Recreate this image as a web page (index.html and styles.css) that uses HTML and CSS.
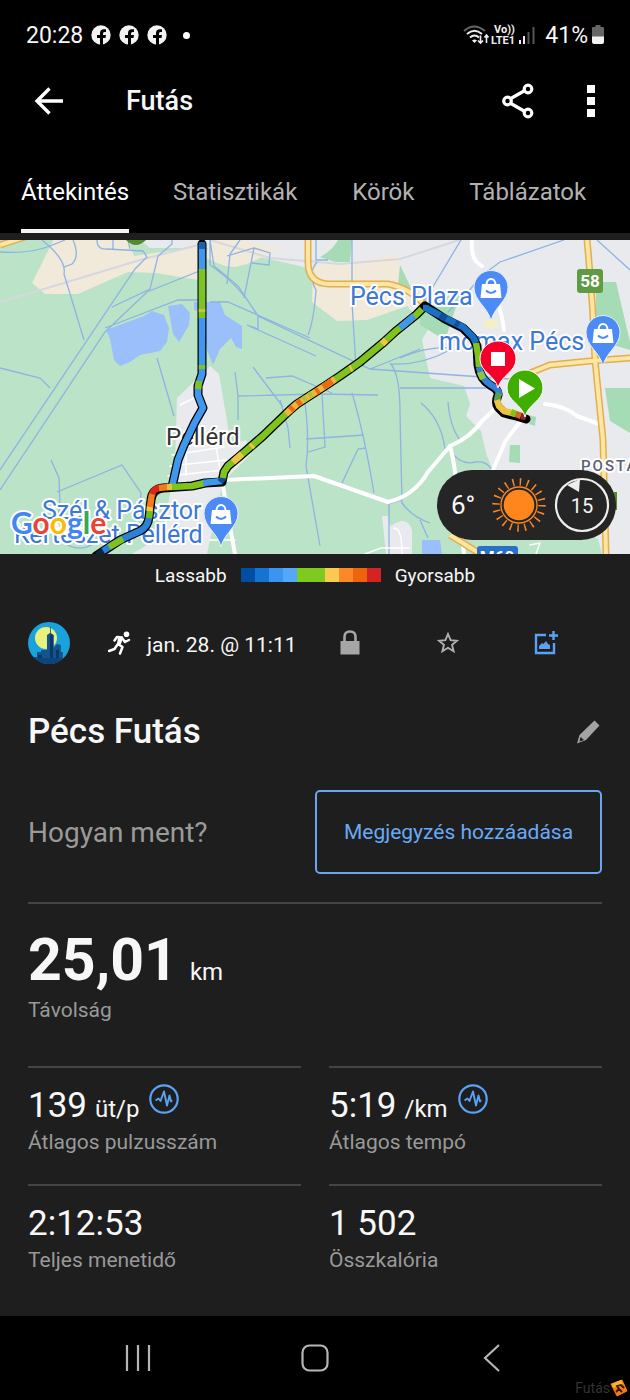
FILE: index.html
```html
<!DOCTYPE html>
<html lang="hu">
<head>
<meta charset="utf-8">
<meta name="viewport" content="width=device-width, initial-scale=1">
<title>Futás</title>
<link rel="stylesheet" href="styles.css">
</head>
<body>
<svg class="defs" aria-hidden="true">
  <symbol id="fb" viewBox="0 0 20 20"><circle cx="10" cy="10" r="9.7" fill="#f2f2f2"/><path d="M9 20v-7H6v-3h3V8.200q0-4 4-4h2v2.800h-1.500q-1.500 0-1.500 1.500V10h3l-.5 3H12v7z" fill="#000"/></symbol>
  <symbol id="pulse" viewBox="0 0 30 30"><circle cx="15" cy="15" r="13.700" fill="none" stroke="#5aa2f5" stroke-width="2.200"/><path d="M6.500 16.500l3-2 2 2.500 3.500-9.500 3 14 2.500-10 1.500 6 1-1.500" fill="none" stroke="#5aa2f5" stroke-width="1.900" stroke-linejoin="round"/></symbol>
  <symbol id="shop" viewBox="0 0 36 52"><path d="M18 51C15 37 1 31 1 17.500a17 17 0 0 1 34 0C35 31 21 37 18 51z" fill="#4c8bf5" stroke="#e6eefc" stroke-width="1"/><path d="M9 14h18l1.500 14h-21z" fill="#fff"/><path d="M13.500 15c0-8 9-8 9 0" fill="none" stroke="#fff" stroke-width="2"/><path d="M13 20.500q5 5 10 0" fill="none" stroke="#4c8bf5" stroke-width="2"/></symbol>
</svg>

<header class="top">
  <div class="status">
    <span class="clock">20:28</span>
    <svg class="fb"><use href="#fb"/></svg>
    <svg class="fb"><use href="#fb"/></svg>
    <svg class="fb"><use href="#fb"/></svg>
    <span class="dot"></span>
    <span class="status-right">
      <svg width="74" height="22" viewBox="0 0 74 22" fill="none" aria-hidden="true">
        <path d="M1 7Q11-2 22 7" stroke="#666" stroke-width="2"/>
        <path d="M4 10Q11.500 3.500 19 10M7 13.500q4.500-4 9 0" stroke="#eee" stroke-width="2"/>
        <path d="M9 16.500q2.500-2 5 0l-2.500 2.500z" fill="#eee"/>
        <path d="M17.500 11.500v7M15 16.500l2.500 2.500 2.500-2.500M23.500 19v-7.500M21.500 13.500l2-2.500 2 2.500" stroke="#eee" stroke-width="1.600"/>
        <text class="volte" x="31" y="9">Vo))</text>
        <text class="volte" x="28" y="20">LTE1</text>
        <path d="M57 16v4M61 12v8" stroke="#eee" stroke-width="2"/><path d="M65.500 8v12M70.500 3v17" stroke="#555" stroke-width="2"/>
      </svg>
      <span>41%</span>
      <svg width="12" height="20" viewBox="0 0 12 20" aria-hidden="true"><path d="M3.500 0h5v2H11q1 0 1 1v9H0V3q0-1 1-1h2.500z" fill="#666"/><path d="M0 11.500h12V17q0 2-2 2H2q-2 0-2-2z" fill="#f2f2f2"/></svg>
    </span>
  </div>
  <div class="appbar">
    <button class="icon" aria-label="Vissza"><svg width="30" height="30" viewBox="0 0 30 30"><path d="M15.500 2.500L3 15l12.500 12.500M3 15h26" fill="none" stroke="#fff" stroke-width="3.400"/></svg></button>
    <h1>Futás</h1>
    <button class="icon share" aria-label="Megosztás"><svg width="34" height="36" viewBox="0 0 34 36" fill="none" stroke="#fff" stroke-width="3.200"><path d="M9 16l14-8M9 20l14 8"/><circle cx="6.500" cy="18" r="3.800"/><circle cx="27" cy="6" r="3.800"/><circle cx="27" cy="30" r="3.800"/></svg></button>
    <button class="icon" aria-label="Továbbiak"><svg width="8" height="34" viewBox="0 0 8 34" fill="#fff"><path d="M0 1h8v8H0zM0 13h8v8H0zM0 25h8v8H0z"/></svg></button>
  </div>
  <nav class="tabs">
    <a href="#attekintes" class="active"><span>Áttekintés</span></a>
    <a href="#statisztikak"><span>Statisztikák</span></a>
    <a href="#korok"><span>Körök</span></a>
    <a href="#tablazatok"><span>Táblázatok</span></a>
  </nav>
</header>

<main>
  <section class="map" aria-label="Térkép">
    <svg class="map-canvas" viewBox="0 240 630 314">
      <rect y="240" width="630" height="314" fill="#bbe3c7"/>
      <g fill="#e8eaed">
        <path d="M140 240h490v314h-28l-4-15-20-8-22-8-35-20-20-10-15-40-5-22-15-15 4-12-6-18-34-8-8-38 10-18-22-12-20-34H330l-30-10-80-18H150z"/>
        <path d="M210 366l9 8 12 70 15-4 5 14-28 28-16 72h-75l30-18 8-42 5-36 2-60z"/>
        <path d="M382 516l4 38h26V530q-4-12-14-8l-8 4-2-10z"/>
      </g>
      <g fill="#f1e9d9">
        <path d="M58 240h70l6 16 70-10v35l-48-8-28-1-50 22H45l-13-11 22-44z"/>
        <path d="M210 240h30l55 12 10 2-18-3-10-1-30 14-12 3-10-1-20-8z"/>
        <path d="M313 262h40l46-8v30l20 18-52 18-30 1-25-19z"/>
      </g>
      <path d="M338 240h14l-2 22-15 0-15-5q12-6 18-17zM400 265l12 25-14-5zM596 282h20l14 60v8l-34-10zM510 445h10v18l-11-1zM605 388h25v45l-20-12zM420 300l40-5-15 45-25-15zM529 415l7 2-1 9-6-2z" fill="#a5dbb5"/>
      <path d="M106 330l38-14 8-5 12 4 5 13-2 14-7 9-20 4-10 7-10 4-6-6-4-21zM168 306l14-2 8 9-1 12-10 17-6-8zM194 302h26l5 13 17 11v23l-6-2-5-9-11 11-7 16-6-15-3-38-10-2zM422 540h18l2 14h-20z" fill="#9abffa"/>
      <g fill="none" stroke="#d6d7df" stroke-width="2"><path d="M0 302L54 286 140 260l62-16M210 240l60 18 70 6 60-5 100-32" /></g>
      <g fill="none" stroke="#8fb3e3" stroke-width="1.300">
        <path d="M0 252q30 2 50-6l15-6M42 240q25 20 22 34l20 66M73 240q7 16-1 24l-8 3M97 240q0 10 10 9l36 2 4 6-12 12L0 470M113 240v9M128 240l2 9M172 240v4l-14 12-8 33-38 18M202 270l-55 22-42 40L0 490M202 300H178L105 328M0 368l40 10 10 10M157 358l17 58M51 460l8 18 1 28-4 18M57 492l65-27 19 28-2 20M60 540q18 14 33 4"/>
        <path d="M210 240l4 26 24 20 20 30 112 53 140 10M210 240v25q30 20 48 51M240 240l-10 14-3 30M227 256l27-8 16 5-1 12-17-2M254 248l-10 50M258 316v13l-11-4 69 31M316 240v20h12M352 240v62l4 66M210 302h18l82 36M317 262q-10 12-1 28-2 30-8 45M235 372l3 24v24M253 367l30 40M266 378l26-2 40 17M238 396l80-2 60 1M304 396q6 40 2 70l14 80M322 394l3 53-17 5M352 393q12 40 22 100M306 439l58-4M342 483l16-34 8-1M390 363q10 10 10 50l2 90q10 14 28 20M370 369l50-20M390 364q30 2 60-14M400 388h88M461 240l-36 60M500 262q-20 14-32 30l-20 20M500 262l64-22M597 240l33 30M421 403q20 16 24 46M448 402q2 25 12 38M450 450q10 16 26 12 14-2 20 16M389 504v50M389 504l12-4M400 358q28-12 50-10"/>
        <path d="M280 400l8 28 2 20M420 520l8 18"/>
      </g>
      <g fill="none" stroke="#fff" stroke-linecap="round" stroke-linejoin="round">
        <path d="M224 480l90-4 74 26q26-6 40-30l22-26q20-8 32-25l14-13" stroke-width="4"/>
        <path d="M450 446q6 24 6 40l8 68M472 240q-2 20 10 26M490 280q12 30 14 50M545 404q20 2 32 12l22 8M525 417q-10 10-20 25l-12 28" stroke-width="4"/>
        <path d="M222 480l5 30 8 44" stroke-width="4"/>
        <path d="M180 405l20-10M178 435h50M172 455l52-8M170 466l56-6M168 476l56-6M215 440l5 30M186 430v45M365 554l16-6h28M394 528q8 0 8 26M210 540h25M530 545l10-2-4 11" stroke-width="1.500"/>
      </g>
      <g fill="none">
        <path d="M0 245l25-8M308 240v22q0 22 22 22h58q22 4 38 22M587 240q6 60 8 120l8 80 3 114M530 373l20-8 40-4 40-3M450 535l40 25" stroke="#e3ae50" stroke-width="7"/>
        <path d="M0 245l25-8M308 240v22q0 22 22 22h58q22 4 38 22M587 240q6 60 8 120l8 80 3 114M530 373l20-8 40-4 40-3M450 535l40 25" stroke="#fde5a2" stroke-width="4"/>
      </g>
      <path d="M126 240h20q-10 10-20 0zM614 492h3v18h-3z" fill="#558b2f"/>
      <rect x="484" y="320" width="14" height="8" rx="3" fill="#f5efc4"/>
      <rect x="577" y="269" width="26" height="24" rx="3" fill="#5f9b45"/>
      <text class="shield" x="590" y="287">58</text>
      <rect x="477" y="546" width="41" height="16" rx="3" fill="#2c6fc8"/>
      <text class="shield" x="497" y="563">M60</text>
      <text class="poi" x="350" y="305">Pécs Plaza</text>
      <text class="poi" x="439" y="350">momax Pécs</text>
      <text class="town" x="166" y="445">Pellérd</text>
      <text class="poi" x="42" y="519">Szél &amp; Pásztor</text>
      <text class="poi" x="14" y="543">Kertészet Pellérd</text>
      <text class="area" x="581" y="471">POSTA</text>
      <use href="#shop" x="473" y="270" width="36" height="52"/>
      <use href="#shop" x="585" y="315" width="36" height="52"/>
      <use href="#shop" x="203" y="496" width="36" height="52"/>

      <g fill="none" stroke-linejoin="round">
        <g stroke="#000" stroke-width="9">
          <path d="M202 244V374l-4 12v9l5 13-8 14-11 23-6 15-6 27" stroke-linecap="round"/>
          <path d="M96 556l24-16 20-9q8-4 9-14l2-17q1-11 12-12l29-2 13-3 17-1 2-10 4-6 12-10 23-20 27-26 7-6 31-20 12-8 20-14 24-20 12-11 20-16 9-9 20 13 18 9 10 10 4 8 1 19q2 14 12 20 9 5 8 10-3 8 0 12l6 6 12 3 10 3" stroke-linecap="round"/>
        </g>
        <g stroke-width="6.500">
          <path d="M202 244V374l-4 12v9l5 13-8 14-11 23-6 15-6 27" stroke="#3f97ee"/>
          <path d="M202 242v7" stroke="#1763ad"/><path d="M202 269v49M202 365v4M199 381l-1 8" stroke="#7fc41c"/><path d="M202 309v3" stroke="#c9c52d"/>
          <path d="M103 551l17-11 20-9q8-4 9-14" stroke="#2b80d8"/><path d="M109 547l14-8" stroke="#7fc41c"/><path d="M97 555l6-4" stroke="#082745"/>
          <path d="M149 518l1-8" stroke="#69bd27"/><path d="M149.500 511l.5-5" stroke="#f6c844"/><path d="M150 507l1-7q0-4 2-7" stroke="#f37b1c"/><path d="M152 494q2-6 8-6" stroke="#d8261d"/><path d="M159 488l9-1" stroke="#f37b1c"/><path d="M167 487h5" stroke="#e4c53a"/><path d="M172 487l20-1 13-3" stroke="#7fc41c"/><path d="M203 483l19-2" stroke="#3f97ee"/><path d="M220 482l4-5" stroke="#134d91"/>
          <path d="M223 478l1-6 4-6 12-10 23-20 27-26 7-6 31-20 12-8 20-14 24-20 12-11 20-16 6-6" stroke="#7fc41c"/>
          <path d="M233 462l9-8M251 447l2-2M382 344l4-4M350 369l2-1" stroke="#f1c541"/>
          <path d="M286 414l11-10 31-20 7-5" stroke="#efb53c"/><path d="M290 410l3-3M297 404l4-3M316 392l3-2M323 387l9-6" stroke="#ea6a16"/><path d="M303 400l3-2M309 396l3-2" stroke="#a7c72d"/>
          <path d="M400 328l14-12" stroke="#3f97ee"/>
          <path d="M423 308l3 0 19 10 18 9 10 10 3 6" stroke="#1b6fc4"/><path d="M440 315l6 4M455 323l4 2" stroke="#104f9c"/>
          <path d="M476 343l2 12 1 12" stroke="#7fc41c"/><path d="M479 367q2 12 12 18 9 5 8 10" stroke="#3580d4"/><path d="M480 372l3 7" stroke="#8cc63f"/>
          <path d="M499 393q-2 5-2 9" stroke="#58a04f"/><path d="M497 400l2 6 5 5 12 3" stroke="#edc442"/><path d="M511 412l5 2" stroke="#7fc41c"/><path d="M516 414l5 2" stroke="#d76622"/><path d="M521 416l5 1" stroke="#8d2638"/>
        </g>
      </g>
      <g stroke="#fff" stroke-width="1">
        <path d="M498 388c-3-13-18-16-18-29a18 18 0 0 1 36 0c0 13-15 16-18 29z" fill="#f4002b"/>
        <path d="M525 417c-3-13-18-16-18-29a18 18 0 0 1 36 0c0 13-15 16-18 29z" fill="#3fae00"/>
      </g>
      <path d="M491 352h14v14h-14zM519 379v19l16-9.500z" fill="#fff"/>
      <text class="google" x="11" y="534"><tspan fill="#4285f4">G</tspan><tspan fill="#ea4335">o</tspan><tspan fill="#fbbc05">o</tspan><tspan fill="#4285f4">g</tspan><tspan fill="#34a853">l</tspan><tspan fill="#ea4335">e</tspan></text>
    </svg>
    <div class="weather">
      <span>6°</span>
      <svg class="sun" width="54" height="54" viewBox="-27 -27 54 54" aria-hidden="true"><circle r="15.300" fill="#ff861c"/><circle r="18" fill="none" stroke="#f5862a" stroke-width="1.400"/><circle r="23" fill="none" stroke="#f5862a" stroke-width="7.500" stroke-dasharray="1.500 5.726"/></svg>
      <svg width="56" height="56" viewBox="-28 -28 56 56" aria-hidden="true"><circle r="26" fill="none" stroke="#eee" stroke-width="2.200"/><path d="M-15-20l13-6-1 13z" fill="#eee"/><text class="wind" y="8">15</text></svg>
    </div>
  </section>

  <div class="legend">
    <span>Lassabb</span>
    <span class="scale"><i class="s1"></i><i class="s2"></i><i class="s3"></i><i class="s4"></i><i class="s5"></i><i class="s5"></i><i class="s6"></i><i class="s7"></i><i class="s8"></i><i class="s9"></i></span>
    <span>Gyorsabb</span>
  </div>

  <section class="content">
    <div class="meta">
      <svg class="avatar" viewBox="0 0 42 42" aria-hidden="true"><clipPath id="round"><circle cx="21" cy="21" r="21"/></clipPath><g clip-path="url(#round)"><path fill="#1ba1dc" d="M0 0h42v42H0z"/><circle cx="18" cy="16" r="11" fill="#e9f07b"/><path d="M5 42v-7h4v-5h4v-2h6V13l3-2 0-6 .8 0v6l3 2v13l3-4 4 1v7h2v12z" fill="#12548c"/><path d="M22 12l3 2v28h-3zM10 33h4v9h-4zM28 28h3v14h-3z" fill="#0b3769"/><path d="M0 36h42v6H0z" fill="#0d447a"/></g></svg>
      <svg class="runner" width="24" height="24" viewBox="0 0 24 24" aria-hidden="true"><circle cx="18.500" cy="3.200" r="2.800" fill="#fff"/><path d="M6.500 9.500L9 6l5 .5-4 6.500 4.500 3L12 22.500M9.500 13.500L6.500 18l-5.500 2M14 7l3 4 4-2" fill="none" stroke="#fff" stroke-width="2.500" stroke-linejoin="round" stroke-linecap="round"/><path d="M10 6l5 1-2 6-4 1z" fill="#fff"/></svg>
      <time>jan. 28. @ 11:11</time>
      <div class="actions">
        <button aria-label="Adatvédelem"><svg width="20" height="26" viewBox="0 0 20 26"><path d="M4.500 11V7q0-5.500 5.500-5.500T15.500 7v4" fill="none" stroke="#a6a6a6" stroke-width="2.600"/><path d="M.5 11h19v13.500H.5z" fill="#a6a6a6"/></svg></button>
        <button aria-label="Kedvenc"><svg width="22" height="22" viewBox="0 0 22 22"><path d="M11 2l2.600 6.200 6.400.5-4.900 4.200 1.500 6.300L11 15.800l-5.600 3.400 1.500-6.300L2 8.700l6.400-.5z" fill="none" stroke="#b0b0b0" stroke-width="1.900"/></svg></button>
        <button aria-label="Kép hozzáadása"><svg width="24" height="26" viewBox="0 0 24 26"><path d="M12 5H2v18h18V13M19.500 1v9M15 5.500h9" fill="none" stroke="#5aa2f5" stroke-width="2.400"/><path d="M5 19v-3l3-3 1.500 1 2.500-3 2 3 2 1v4z" fill="#5aa2f5"/></svg></button>
      </div>
    </div>

    <div class="title">
      <h2>Pécs Futás</h2>
      <button aria-label="Szerkesztés"><svg width="24" height="24" viewBox="0 0 24 24"><path d="M18.500.5l5 5L10 20l-9 3.500L3.500 15z" fill="#a3a3a3"/><path d="M4.500 17l3.500 3-4.500 1.500z" fill="#1e1e1e"/></svg></button>
    </div>

    <div class="note">
      <span>Hogyan ment?</span>
      <button>Megjegyzés hozzáadása</button>
    </div>

    <div class="distance">
      <p class="value"><strong>25,01</strong><small>km</small></p>
      <p class="label">Távolság</p>
    </div>

    <div class="stats">
      <div class="stat"><p class="value">139 <small>üt/p</small><svg class="pulse"><use href="#pulse"/></svg></p><p class="label">Átlagos pulzusszám</p></div>
      <div class="stat"><p class="value">5:19 <small>/km</small><svg class="pulse"><use href="#pulse"/></svg></p><p class="label">Átlagos tempó</p></div>
      <div class="stat"><p class="value">2:12:53</p><p class="label">Teljes menetidő</p></div>
      <div class="stat"><p class="value">1 502</p><p class="label">Összkalória</p></div>
    </div>
  </section>
</main>

<footer class="sysnav">
  <button aria-label="Legutóbbiak"><svg width="28" height="28" viewBox="0 0 28 28"><path d="M3 1v26M14 1v26M25 1v26" stroke="#b5b5b5" stroke-width="2.200"/></svg></button>
  <button aria-label="Kezdőlap"><svg width="28" height="28" viewBox="0 0 28 28"><rect x="1.500" y="1.500" width="25" height="25" rx="7" fill="none" stroke="#b5b5b5" stroke-width="2.200"/></svg></button>
  <button aria-label="Vissza"><svg width="28" height="28" viewBox="0 0 28 28"><path d="M21 1L7 14l14 13" fill="none" stroke="#b5b5b5" stroke-width="2.200"/></svg></button>
  <div class="mark"><span>Futás</span><svg width="18" height="18" viewBox="0 0 18 18" aria-hidden="true"><path d="M1 5l11-4 5 11-10 5z" fill="#f47a1a" stroke="#f47a1a" stroke-linejoin="round"/><path d="M2 5l9-4 2 4-10 4z" fill="#f9b52c"/><path d="M6 13l3-3-2-3 4-1 3 3M9 10l3 3" fill="none" stroke="#3a1505" stroke-width="1.800"/></svg></div>
</footer>
</body>
</html>
```
FILE: styles.css
```css
* { box-sizing: border-box; }
body {
  margin: 0;
  min-height: 100vh;
  display: flex;
  flex-direction: column;
  background: #1e1e1e;
  color: #f7f7f7;
  font-family: Roboto, "Liberation Sans", sans-serif;
}
h1, h2, p { margin: 0; }
svg { display: block; flex: none; }
button { padding: 0; border: 0; background: none; color: inherit; font: inherit; }
.defs { position: absolute; width: 0; height: 0; }

.top { background: #000; }
.status {
  display: flex;
  align-items: center;
  gap: 8px;
  height: 68px;
  padding: 2px 26px 0;
  font-size: 23px;
}
.fb { width: 20px; height: 20px; }
.dot { width: 7px; height: 7px; margin-left: 8px; border-radius: 50%; background: #fff; }
.status-right { display: flex; align-items: center; gap: 4px; margin-left: auto; }
.status-right > :nth-child(1) { margin-right: 4px; }
.volte { font: 700 11px Roboto, sans-serif; fill: #eee; }

.appbar { display: flex; align-items: center; height: 65px; padding: 0 35px 0 34px; }
.appbar h1 { flex: 1; margin-left: 62px; font-size: 27px; font-weight: 500; }
.share { margin-right: 52px; }

.tabs { display: flex; gap: 2px; height: 100px; }
.tabs a {
  display: flex;
  justify-content: center;
  min-width: 126px;
  padding: 0 21px;
  color: #b2b2b2;
  font-size: 24px;
  line-height: 28px;
  text-decoration: none;
}
.tabs span { padding-top: 45px; }
.tabs .active span { border-bottom: 4px solid #f5f5f5; color: #fff; }

.map { position: relative; margin-top: 7px; }
.map-canvas { width: 100%; height: auto; }
.map text { font-family: Roboto, sans-serif; }
.poi, .town, .area, .google { stroke: #fff; stroke-width: 4px; paint-order: stroke; stroke-linejoin: round; }
.poi { font-size: 25px; fill: #3b78d8; }
.town { font-size: 24px; fill: #333; }
.area { font-size: 15px; font-weight: 500; letter-spacing: 2px; fill: #5b6173; }
.shield { font-size: 17px; font-weight: 700; fill: #fff; text-anchor: middle; }
.map .google { font-family: Lato, sans-serif; font-size: 30px; font-weight: 700; }
.weather {
  position: absolute;
  right: 14px;
  bottom: 14px;
  display: flex;
  align-items: center;
  gap: 8px;
  width: 179px;
  height: 70px;
  padding: 0 6px 0 14px;
  border-radius: 35px;
  background: #252525;
  font-size: 26px;
}
.sun { margin-left: auto; }
.wind { font-size: 20px; fill: #f5f5f5; text-anchor: middle; }

.legend { display: flex; align-items: center; justify-content: center; gap: 14px; height: 42px; font-size: 19px; }
.scale { display: flex; width: 140px; height: 14px; }
.scale i { flex: 1; }
.s1 { background: #004ea3; }
.s2 { background: #1573d2; }
.s3 { background: #3d94f0; }
.s4 { background: #55a7fa; }
.s5 { background: #80ca20; }
.s6 { background: #fbca50; }
.s7 { background: #fb8928; }
.s8 { background: #ec640c; }
.s9 { background: #d52323; }

.content { padding: 26px 28px 14px; }
.meta { display: flex; align-items: center; }
.avatar { width: 42px; height: 42px; }
.runner { margin: 0 15px 0 38px; }
.meta time { padding-top: 4px; font-size: 21px; line-height: 28px; }
.actions { display: flex; flex: 1; align-items: center; max-width: 294px; margin: 0 7px 0 auto; }
.actions button { display: flex; flex: 1; justify-content: center; }

.title { display: flex; align-items: center; justify-content: space-between; margin-top: 46px; }
.title h2 { font-size: 35px; font-weight: 500; line-height: 44px; }
.title button { margin-right: 2px; }

.note { display: flex; align-items: center; justify-content: space-between; margin-top: 36px; }
.note span { color: #9a9a9a; font-size: 28px; }
.note button {
  width: 50%;
  height: 84px;
  border: 2px solid #68a6ef;
  border-radius: 5px;
  color: #68aaf5;
  font-size: 21px;
}

.value { display: flex; align-items: baseline; gap: 8px; font-size: 35px; line-height: 44px; }
.value small { font-size: 24px; line-height: 28px; }
.label { color: #999; font-size: 21px; line-height: 28px; }
.distance { margin-top: 28px; padding: 20px 0 42px; border-top: 2px solid #444; }
.distance .value { gap: 12px; line-height: 72px; }
.distance strong { font-size: 59px; }
.stats { display: grid; grid-template-columns: 1fr 1fr; column-gap: 28px; }
.stat { padding: 16px 0 28px; border-top: 2px solid #444; }
.pulse { width: 30px; height: 30px; align-self: flex-start; margin-left: 2px; }

.sysnav {
  position: relative;
  display: grid;
  grid-template-columns: repeat(3, 1fr);
  align-items: center;
  height: 84px;
  margin-top: auto;
  padding: 0 50px;
  background: #000;
}
.sysnav button { display: flex; justify-content: center; }
.mark { position: absolute; right: 2px; bottom: 3px; display: flex; align-items: center; color: #333; font-size: 14px; }
```
